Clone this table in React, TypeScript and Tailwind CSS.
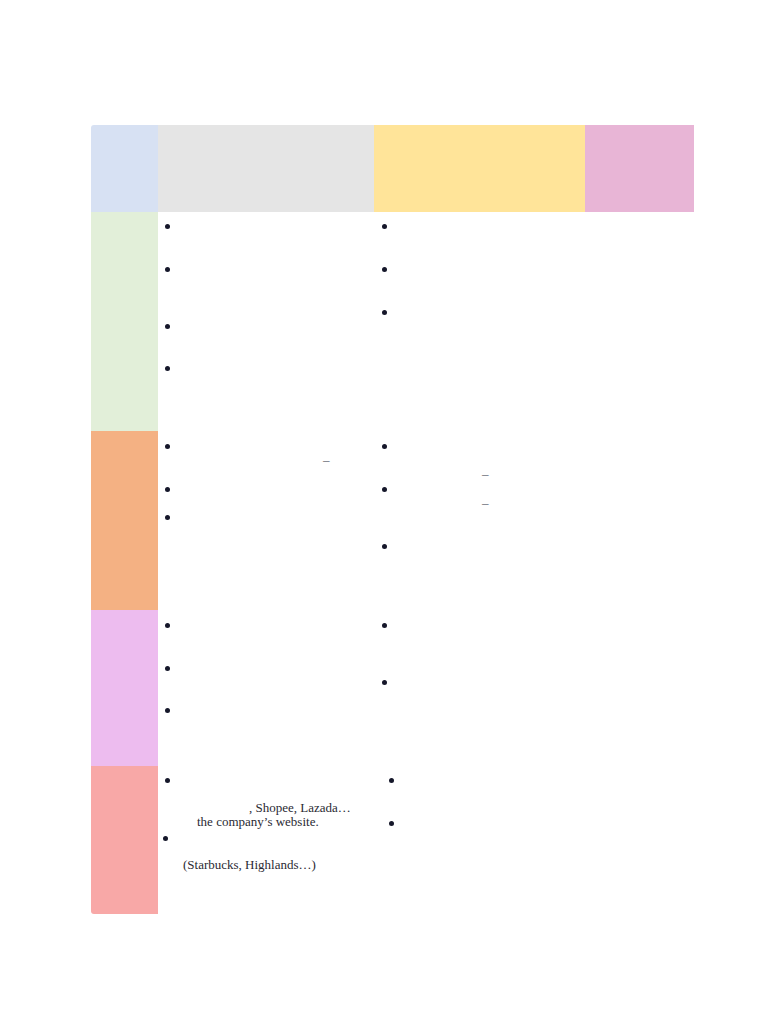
import * as React from "react"

function Dot({ className = "" }: { className?: string }) {
  return (
    <div
      className={`h-[5px] w-[5px] shrink-0 rounded-full bg-[#15172a] ${className}`}
    />
  )
}

function Line({
  children,
  className = "",
}: {
  children: React.ReactNode
  className?: string
}) {
  return (
    <div
      className={`h-[14px] whitespace-nowrap font-['Liberation_Serif',serif] text-[13px] leading-[14px] text-[#2a2a33] ${className}`}
    >
      {children}
    </div>
  )
}

function Dash({ className = "" }: { className?: string }) {
  return (
    <div
      className={`h-[10px] font-['Liberation_Serif',serif] text-[13px] leading-[10px] text-[#555a66] ${className}`}
    >
      –
    </div>
  )
}

export default function App() {
  return (
    <div className="min-h-screen bg-white pt-[125px] pl-[91px]">
      <div className="grid w-[603px] grid-cols-[67px_216px_211px_109px]">
        {/* header row */}
        <div className="h-[87px] rounded-tl-[3px] bg-[#d7e1f3]" />
        <div className="h-[87px] bg-[#e5e5e5]" />
        <div className="h-[87px] bg-[#ffe499]" />
        <div className="h-[87px] bg-[#e8b5d6]" />

        {/* green row */}
        <div className="h-[219px] bg-[#e2efd9]" />
        <div className="flex flex-col pl-[7px]">
          <Dot className="mt-[12px]" />
          <Dot className="mt-[38px]" />
          <Dot className="mt-[52px]" />
          <Dot className="mt-[37px]" />
        </div>
        <div className="flex flex-col pl-[8px]">
          <Dot className="mt-[12px]" />
          <Dot className="mt-[38px]" />
          <Dot className="mt-[38px]" />
        </div>
        <div />

        {/* orange row */}
        <div className="h-[179px] bg-[#f4b183]" />
        <div className="flex flex-col pl-[7px]">
          <Dot className="mt-[13px]" />
          <Dash className="mt-[6px] pl-[158px]" />
          <Dot className="mt-[22px]" />
          <Dot className="mt-[23px]" />
        </div>
        <div className="flex flex-col pl-[8px]">
          <Dot className="mt-[13px]" />
          <Dash className="mt-[20px] pl-[100px]" />
          <Dot className="mt-[8px]" />
          <Dash className="mt-[6px] pl-[100px]" />
          <Dot className="mt-[36px]" />
        </div>
        <div />

        {/* purple row */}
        <div className="h-[156px] bg-[#edbcef]" />
        <div className="flex flex-col pl-[7px]">
          <Dot className="mt-[13px]" />
          <Dot className="mt-[38px]" />
          <Dot className="mt-[37px]" />
        </div>
        <div className="flex flex-col pl-[8px]">
          <Dot className="mt-[13px]" />
          <Dot className="mt-[52px]" />
        </div>
        <div />

        {/* red row */}
        <div className="h-[148px] rounded-bl-[3px] bg-[#f8a8a7]" />
        <div className="flex flex-col">
          <Dot className="mt-[12px] ml-[7px]" />
          <Line className="mt-[18px] pl-[91px]">, Shopee, Lazada…</Line>
          <Line className="pl-[39px]">the company’s website.</Line>
          <Dot className="mt-[7px] ml-[5px]" />
          <Line className="mt-[17px] pl-[25px]">(Starbucks, Highlands…)</Line>
        </div>
        <div className="flex flex-col pl-[15px]">
          <Dot className="mt-[12px]" />
          <Dot className="mt-[38px]" />
        </div>
        <div />
      </div>
    </div>
  )
}
